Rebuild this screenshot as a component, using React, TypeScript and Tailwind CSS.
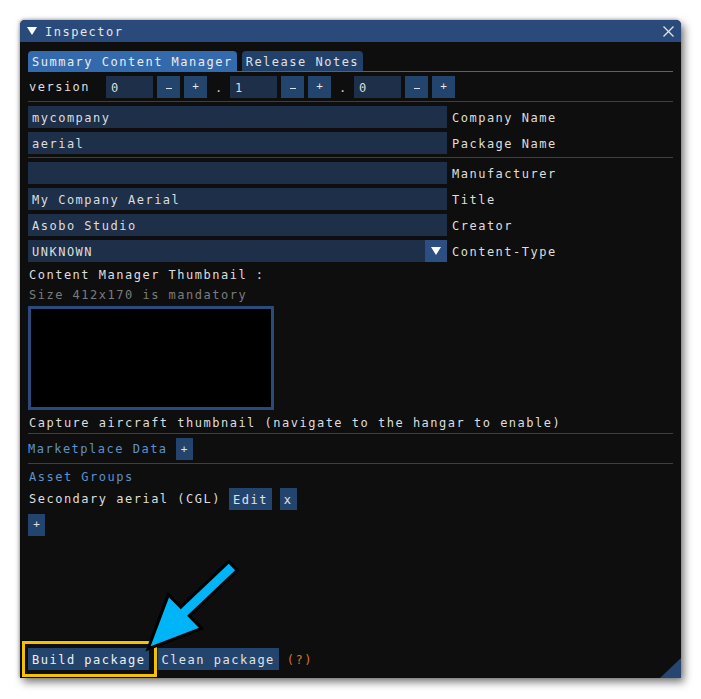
import React from "react";

const Tri = () => (
  <svg width="10" height="8" viewBox="0 0 10 8">
    <polygon points="0,0 10,0 5,8" fill="#ffffff" />
  </svg>
);

const Btn = ({ children, className = "" }: { children: React.ReactNode; className?: string }) => (
  <div className={`h-[22px] flex items-center justify-center bg-[#23456d] text-[#e2e2e2] px-[4px] ${className}`}>
    {children}
  </div>
);

const Sep = () => <div className="mt-[3px] h-px bg-[#3e3e47] shrink-0" />;

const Field = ({ value, label, dropdown }: { value: string; label: string; dropdown?: boolean }) => (
  <div className="mt-[4px] h-[22px] flex items-center shrink-0">
    <div className="w-[419px] h-[22px] flex bg-[#1d2f49]">
      <div className="flex-1 flex items-center pl-[4px] pt-[1px] text-[#dedede]">{value}</div>
      {dropdown && (
        <div className="w-[22px] h-[22px] bg-[#2a4f80] flex items-center justify-center">
          <Tri />
        </div>
      )}
    </div>
    <div className="ml-[5px] pt-[1px] text-[#dedede]">{label}</div>
  </div>
);

const NumInput = ({ v }: { v: string }) => (
  <div className="w-[47px] h-[22px] bg-[#1d2f49] flex items-center pl-[5px] pt-[1px] text-[#dedede]">{v}</div>
);

const SmallBtn = ({ c }: { c: string }) => (
  <div className="w-[23px] h-[22px] bg-[#23456d] flex items-center justify-center text-[#e8e8e8] tracking-[0px]">
    {c === "-" ? <div className="w-[6px] h-px bg-[#e0e0e0] mt-[2px]" /> : <span className="text-[11px] pt-[1px]">+</span>}
  </div>
);

const Dot = () => <div className="w-[15px] text-center text-[#c8c8c8] tracking-[0px] pt-[1px]">.</div>;

export default function App() {
  return (
    <div className="w-[701px] h-[699px] bg-white relative pt-[20px] pl-[20px] overflow-hidden font-['DejaVu_Sans_Mono',monospace] text-[12px] tracking-[1.5px]">
      <div className="w-[661px] h-[658px] flex flex-col bg-[#0e0e0e] rounded-t-[5px] relative shadow-[3px_4px_8px_rgba(0,0,0,0.55),-1px_-1px_3px_rgba(0,0,0,0.25)]">
        {/* title bar */}
        <div className="h-[22px] shrink-0 bg-[#294a7a] rounded-t-[5px] flex items-center pl-[7px] pr-[7px]">
          <Tri />
          <span className="ml-[8px] pt-[1px] text-[#e6e6e6]">Inspector</span>
          <svg className="ml-auto" width="11" height="11" viewBox="0 0 11 11">
            <line x1="0.5" y1="0.5" x2="10.5" y2="10.5" stroke="#e6e6e6" strokeWidth="1.3" />
            <line x1="10.5" y1="0.5" x2="0.5" y2="10.5" stroke="#e6e6e6" strokeWidth="1.3" />
          </svg>
        </div>

        {/* body */}
        <div className="flex-1 flex flex-col px-[8px] pt-[9px] pb-[8px]">
          {/* tabs */}
          <div className="flex items-end gap-[5px] border-b border-[#3369ad] shrink-0">
            <div className="h-[20px] px-[4px] pt-[1px] flex items-center bg-[#3369ad] rounded-t-[4px] text-[#ececec]">
              Summary Content Manager
            </div>
            <div className="h-[20px] px-[4px] pt-[1px] flex items-center bg-[#21406a] rounded-t-[4px] text-[#e2e2e2]">
              Release Notes
            </div>
          </div>

          {/* version row */}
          <div className="mt-[4px] h-[22px] flex items-center gap-[4px] shrink-0">
            <div className="w-[74px] pl-[1px] text-[#dedede]">version</div>
            <NumInput v="0" />
            <SmallBtn c="-" />
            <SmallBtn c="+" />
            <Dot />
            <NumInput v="1" />
            <SmallBtn c="-" />
            <SmallBtn c="+" />
            <Dot />
            <NumInput v="0" />
            <SmallBtn c="-" />
            <SmallBtn c="+" />
          </div>

          <Sep />
          <Field value="mycompany" label="Company Name" />
          <Field value="aerial" label="Package Name" />
          <Sep />
          <Field value="" label="Manufacturer" />
          <Field value="My Company Aerial" label="Title" />
          <Field value="Asobo Studio" label="Creator" />
          <Field value="UNKNOWN" label="Content-Type" dropdown />

          <div className="mt-[4px] h-[16px] leading-[16px] pt-[1px] pl-[1px] text-[#dedede] shrink-0">Content Manager Thumbnail :</div>
          <div className="mt-[4px] h-[16px] leading-[16px] pt-[1px] pl-[1px] text-[#7c7c7c] shrink-0">Size 412x170 is mandatory</div>
          <div className="mt-[4px] w-[246px] h-[104px] border-[3px] border-[#294a7a] bg-black shrink-0" />
          <div className="mt-[4px] h-[16px] leading-[16px] pt-[1px] pl-[1px] text-[#dedede] shrink-0">
            Capture aircraft thumbnail (navigate to the hangar to enable)
          </div>
          <Sep />
          <div className="mt-[4px] h-[22px] flex items-center shrink-0">
            <span className="text-[#5f91cb]">Marketplace Data</span>
            <Btn className="ml-[8px] w-[17px] px-0 tracking-[0px] text-[11px] pt-[3px]">+</Btn>
          </div>
          <Sep />
          <div className="mt-[4px] h-[16px] leading-[16px] pt-[1px] pl-[1px] text-[#5f91cb] shrink-0">Asset Groups</div>
          <div className="mt-[4px] h-[22px] flex items-center shrink-0">
            <span className="pl-[1px] text-[#dedede]">Secondary aerial (CGL)</span>
            <Btn className="ml-[8px] pt-[2px]">Edit</Btn>
            <Btn className="ml-[8px] pt-[2px]">x</Btn>
          </div>
          <div className="mt-[4px] flex shrink-0">
            <Btn className="w-[17px] px-0 tracking-[0px] text-[11px] pt-[1px]">+</Btn>
          </div>

          <div className="flex-1" />

          <div className="h-[22px] flex items-center shrink-0">
            <Btn className="bg-[#4b8fd8] text-[#f0f0f0] pt-[1px]">Build package</Btn>
            <Btn className="ml-[8px] pt-[1px]">Clean package</Btn>
            <span className="ml-[8px] pt-[1px] text-[#d67a1e]">(?)</span>
          </div>
        </div>

        {/* resize grip */}
        <svg className="absolute right-0 bottom-0" width="21" height="20" viewBox="0 0 21 20">
          <polygon points="21,0 21,20 0,20" fill="#27466f" />
        </svg>
      </div>

      {/* highlight box */}
      <div className="absolute left-[22px] top-[641px] w-[135px] h-[36px] border-[3px] border-[#f2c200] shadow-[0_0_0_1px_rgba(0,0,0,0.6)]" />

      {/* arrow */}
      <svg className="absolute left-0 top-0 pointer-events-none" width="701" height="699" viewBox="0 0 701 699">
        <polygon
          points="228.8,561.7 180.8,607.2 168.4,594.6 148,649 201.6,628.4 189.2,615.8 237.2,570.3"
          fill="#00b4f8"
          stroke="#000000"
          strokeWidth="3"
          strokeLinejoin="miter"
        />
      </svg>
    </div>
  );
}
